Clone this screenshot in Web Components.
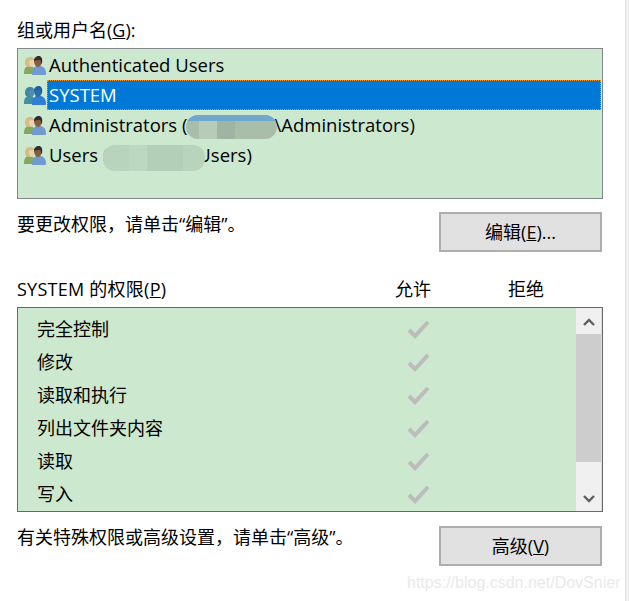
<!DOCTYPE html>
<html lang="zh">
<head>
<meta charset="utf-8">
<title>权限</title>
<style>
  html, body { margin: 0; background: #fff; }
  body { font: 18px/24px "Open Sans", "Noto Sans CJK SC", sans-serif; color: #000; }
</style>
</head>
<body>
<template id="users-icon">
  <svg width="22" height="19" viewBox="0 0 22 19">
    <path class="shirt1" d="M0 18c0-5 1-7 4-8h3c3 1 4 3 4 8z"/>
    <path class="hair1" d="M1 7c0-4 2-6 5-6s4 1 4 4c0 3-1 6-4 6-3 0-5-1-5-4z"/>
    <path class="face1" d="M5 5c1-1 3-1 5-1 1 2 0 6-2 7-2 0-3-3-3-6z"/>
    <path class="shirt2" d="M8 19c0-6 1-7 4-9h5c3 1 5 3 5 8 0 1-1 1-2 1z"/>
    <path class="face2" d="M10 5c0-3 2-4 4-4s4 1 4 4c0 3-2 6-4 6s-4-3-4-6z"/>
    <path class="hair2" d="M10 5c0-3 2-5 5-5 2 0 4 2 3 7l-1 1c0-2 0-3-1-4-2 0-4 0-6 1z"/>
  </svg>
</template>

<script>
class WinPage extends HTMLElement {
  constructor() {
    super();
    this.attachShadow({ mode: 'open' });
    this.shadowRoot.innerHTML = `
      <style>
        :host { display: flex; width: 629px; height: 601px; position: relative; overflow: hidden; }
        .main { width: 625px; box-sizing: border-box; padding: 18px 22px 0 17px; }
        .strip { width: 4px; background: #f0f0f0; border-left: 1px solid #e6e6e6; box-sizing: border-box; }
        .mark { position: absolute; left: 407px; top: 572px; font: 16px/22px "Liberation Sans", sans-serif; color: #e9e9e9; white-space: nowrap; }
      </style>
      <div class="main"><slot></slot></div>
      <div class="strip"></div>
      <div class="mark">https://blog.csdn.net/DovSnier</div>
    `;
  }
}
customElements.define('win-page', WinPage);

class WinListbox extends HTMLElement {
  constructor() {
    super();
    this.attachShadow({ mode: 'open' });
    this.shadowRoot.innerHTML = `
      <style>
        :host { display: block; height: 151px; box-sizing: border-box; margin-top: 6px; padding: 1px; border: 1px solid #82878c; background: #cce8cf; }
      </style>
      <slot></slot>
    `;
  }
}
customElements.define('win-listbox', WinListbox);

class PrincipalRow extends HTMLElement {
  constructor() {
    super();
    this.attachShadow({ mode: 'open' });
    this.shadowRoot.innerHTML = `
      <style>
        :host { display: flex; height: 30px; align-items: center; padding-left: 5px; white-space: nowrap; font-size: 18.5px; }
        .icon { width: 24px; flex: none; }
        svg { display: block; }
        .shirt1 { fill: #86a85c; }
        .hair1 { fill: #d2bd86; }
        .face1 { fill: #ecd3ac; }
        .shirt2 { fill: #6f9bd0; }
        .face2 { fill: #8a5c3e; }
        .hair2 { fill: #2f2f33; }
        :host([selected]) .shirt1 { fill: #3f8f9f; }
        :host([selected]) .hair1 { fill: #3d86a5; }
        :host([selected]) .face1 { fill: #4c8fb0; }
        :host([selected]) .shirt2 { fill: #2f7ed8; }
        :host([selected]) .face2 { fill: #2a6da8; }
        :host([selected]) .hair2 { fill: #1f5f96; }
        .name { flex: 1; align-self: stretch; display: flex; align-items: center; padding-left: 2px; margin-left: -1px; }
        :host([selected]) .name { background: #0078d7; color: #fff; outline: 1px dotted #e8912f; outline-offset: -1px; }
      </style>
      <div class="icon"></div>
      <div class="name"><span><slot></slot></span></div>
    `;
    this.shadowRoot.querySelector('.icon')
      .appendChild(document.getElementById('users-icon').content.cloneNode(true));
  }
}
customElements.define('principal-row', PrincipalRow);

// the smudged out machine name
class MosaicPatch extends HTMLElement {
  constructor() {
    super();
    this.attachShadow({ mode: 'open' });
    this.shadowRoot.innerHTML = `
      <style>
        :host { display: inline-block; margin-block: -4px; border-radius: 12px; overflow: hidden; position: relative; background: var(--blocks); }
        :host([stripe])::before { content: ""; display: block; height: 6px; background: #6fa8cc; }
      </style>
    `;
  }
}
customElements.define('mosaic-patch', MosaicPatch);

class WinRow extends HTMLElement {
  constructor() {
    super();
    this.attachShadow({ mode: 'open' });
    this.shadowRoot.innerHTML = `
      <style>
        :host { display: flex; justify-content: space-between; align-items: flex-start; margin-top: 13px; padding-right: 1px; }
      </style>
      <div><slot></slot></div>
      <slot name="action"></slot>
    `;
  }
}
customElements.define('win-row', WinRow);

class WinButton extends HTMLElement {
  constructor() {
    super();
    this.attachShadow({ mode: 'open' });
    this.shadowRoot.innerHTML = `
      <style>
        :host { display: flex; align-items: center; justify-content: center; width: 163px; height: 40px; box-sizing: border-box; border: 2px solid #adadad; background: #e1e1e1; }
      </style>
      <span><slot></slot></span>
    `;
  }
}
customElements.define('win-button', WinButton);

class PermHeader extends HTMLElement {
  constructor() {
    super();
    this.attachShadow({ mode: 'open' });
    this.shadowRoot.innerHTML = `
      <style>
        :host { display: grid; grid-template-columns: 378px 113px 1fr; margin-top: 25px; height: 30px; line-height: 24px; }
        .title { letter-spacing: .25px; white-space: nowrap; }
      </style>
      <div class="title"><slot></slot></div>
      <div>允许</div>
      <div>拒绝</div>
    `;
  }
}
customElements.define('perm-header', PermHeader);

class PermList extends HTMLElement {
  constructor() {
    super();
    this.attachShadow({ mode: 'open' });
    this.shadowRoot.innerHTML = `
      <style>
        :host { display: flex; height: 205px; box-sizing: border-box; border: 1px solid #696969; background: #cce8cf; padding-right: 1px; overflow: hidden; }
        .rows { flex: 1; padding-top: 4px; min-width: 0; }
        .bar { width: 25px; flex: none; display: flex; flex-direction: column; background: #f0f0f0; }
        .arrow { height: 26px; flex: none; display: flex; align-items: center; justify-content: center; }
        .arrow svg { margin-top: 2px; }
        .thumb { height: 128px; flex: none; background: #cdcdcd; }
        .gap { flex: 1; }
      </style>
      <div class="rows"><slot></slot></div>
      <div class="bar">
        <div class="arrow"><svg width="12" height="8" viewBox="0 0 12 8"><path d="M1 7l5-5 5 5" fill="none" stroke="#606060" stroke-width="2.4"/></svg></div>
        <div class="thumb"></div>
        <div class="gap"></div>
        <div class="arrow"><svg width="12" height="8" viewBox="0 0 12 8"><path d="M1 1l5 5 5-5" fill="none" stroke="#606060" stroke-width="2.4"/></svg></div>
      </div>
    `;
  }
}
customElements.define('perm-list', PermList);

class PermRow extends HTMLElement {
  constructor() {
    super();
    this.attachShadow({ mode: 'open' });
    this.shadowRoot.innerHTML = `
      <style>
        :host { display: grid; grid-template-columns: 369px 24px; height: 33px; padding-left: 19px; align-items: center; }
        svg { display: block; }
      </style>
      <div><slot></slot></div>
      <svg width="24" height="20" viewBox="0 0 24 20"><path d="M3 11l6 6L22 3" fill="none" stroke="#bcbcbc" stroke-width="4"/></svg>
    `;
  }
}
customElements.define('perm-row', PermRow);
</script>

<win-page>
  <div>组或用户名(<u>G</u>):</div>
  <win-listbox>
    <principal-row>Authenticated Users</principal-row>
    <principal-row selected>SYSTEM</principal-row>
    <principal-row>Administrators (<mosaic-patch stripe style="width:91px;height:24px;vertical-align:-3px;margin-left:-1px;margin-right:-3px;--blocks:linear-gradient(90deg,#a9bdab 0 13px,#b6ccb8 13px 31px,#9fb4a2 31px 49px,#a9bea9 49px)"></mosaic-patch>\Administrators)</principal-row>
    <principal-row>Users (<mosaic-patch style="width:102px;height:26px;vertical-align:-5px;margin-left:-5px;margin-right:-8px;--blocks:linear-gradient(90deg,#b9d4bc 0 26px,#bdd8c1 26px 44px,#b3cfb7 44px 80px,#b9d4bc 80px)"></mosaic-patch>Users)</principal-row>
  </win-listbox>
  <win-row>要更改权限，请单击“编辑”。<win-button slot="action">编辑(<u>E</u>)...</win-button></win-row>
  <perm-header>SYSTEM 的权限(<u>P</u>)</perm-header>
  <perm-list>
    <perm-row>完全控制</perm-row>
    <perm-row>修改</perm-row>
    <perm-row>读取和执行</perm-row>
    <perm-row>列出文件夹内容</perm-row>
    <perm-row>读取</perm-row>
    <perm-row>写入</perm-row>
  </perm-list>
  <win-row>有关特殊权限或高级设置，请单击“高级”。<win-button slot="action" style="margin-top:1px">高级(<u>V</u>)</win-button></win-row>
</win-page>
</body>
</html>
